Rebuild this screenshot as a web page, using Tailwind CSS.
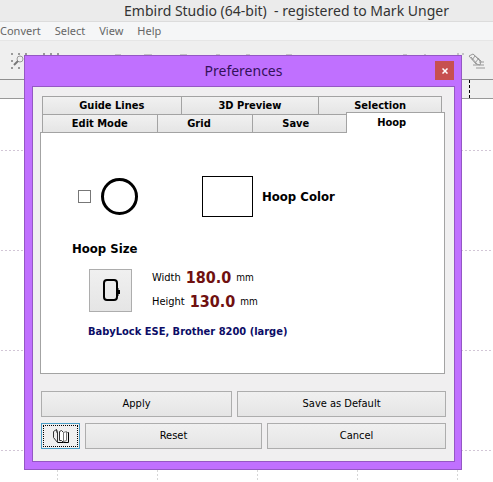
<!DOCTYPE html>
<html lang="en">
<head>
    <meta charset="UTF-8">
    <meta name="viewport" content="width=device-width, initial-scale=1.0">
    <title>Embird Studio - Preferences</title>
    <script src="https://cdn.jsdelivr.net/npm/@tailwindcss/browser@4"></script>
</head>
<body class="relative h-screen overflow-hidden bg-white font-['Noto_Sans','Open_Sans',sans-serif] text-[#222]">
    <!-- Main window -->
    <div class="flex h-full flex-col">
        <header class="flex h-[22px] shrink-0 items-center justify-center border-b border-[#dcdcdc] bg-[#ebebeb] pl-20">
            <h1 class="whitespace-pre text-[14px] leading-5 text-[#333]">Embird Studio (64-bit)  - registered to Mark Unger</h1>
        </header>
        <nav class="flex h-[19px] shrink-0 items-center gap-[14px] border-b border-[#e6e6e6] bg-[#f5f6f7] text-[11px] leading-4 text-[#666]">
            <button>Convert</button>
            <button>Select</button>
            <button>View</button>
            <button>Help</button>
        </nav>
        <div class="flex h-[39px] shrink-0 items-start justify-between border-b border-[#8f8f8f] bg-[#efefef] pt-[11px] pr-1 pl-[10px]">
            <svg class="h-5 w-[320px]" viewBox="0 0 320 20" fill="none" stroke="#999">
                <path d="M1 2h16M1 9h3M1 16h12M33 2h18" stroke-width="2" stroke-dasharray="2 5" />
                <circle cx="10" cy="7" r="3" />
                <path d="M8 9l-4 4" stroke="#777" stroke-width="2" />
                <path d="M105 3h6M134 3h8M170 3h7M206 3h4M236 3h4M276 3h6" />
            </svg>
            <svg class="h-5 w-[90px]" viewBox="0 0 90 20" fill="none" stroke="#999">
                <path d="M4 3h4M25 3h2M58 2h2M63 2h2" />
                <path d="M70 4l4-2 8 7-1 4-4-1zM72 5l6 7M74 2l7 7M73 8l3-4M76 11l4-5" />
                <path d="M74 13h11M77 16h9M80 10h5" />
            </svg>
        </div>
        <div class="flex h-[19px] shrink-0 justify-end border-b border-[#999] bg-[#efefef] pr-[23px]">
            <div class="border-l border-dashed border-black"></div>
        </div>
        <svg class="min-h-0 w-full flex-1" aria-hidden="true">
            <defs>
                <pattern id="grid" x="57" y="51" width="100" height="100" patternUnits="userSpaceOnUse">
                    <path d="M0 .5H100" stroke="#d2c6d6" stroke-dasharray="2 2" />
                    <path d="M.5 0V100" stroke="#d6d6d6" stroke-dasharray="2 2" />
                </pattern>
            </defs>
            <rect width="100%" height="100%" fill="url(#grid)" />
        </svg>
    </div>

    <!-- Preferences dialog -->
    <section role="dialog" aria-labelledby="dialogTitle" class="absolute top-[55px] right-[31px] left-6 border border-[#9458c4] bg-[#c070ff] pr-[6px] pb-[7px] pl-[7px]">
        <div class="relative flex h-[30px] items-center justify-center">
            <h2 id="dialogTitle" class="text-[14px] leading-5 text-[#33105a]">Preferences</h2>
            <button aria-label="Close" class="absolute top-[5px] right-px flex h-[19px] w-[19px] items-center justify-center bg-[#c75050]">
                <svg class="h-[6px] w-[6px]" viewBox="0 0 6 6" stroke="#fff" stroke-width="1.500"><path d="M.5.5l5 5M5.500.5l-5 5" /></svg>
            </button>
        </div>

        <div class="border border-[#9458c4] bg-[#f0eff0] pt-[9px] pr-[9px] pb-3 pl-[7px] font-['DejaVu_Sans_Condensed','DejaVu_Sans',sans-serif] text-[11px] leading-4 text-black">
            <!-- Tabs -->
            <div role="tablist" class="pr-[3px] pl-[2px] font-bold">
                <div class="flex h-[18px] border-t border-l border-[#a3a3a3]">
                    <button role="tab" class="flex-[139] border-r border-[#a3a3a3] bg-linear-to-b from-[#f1f1f1] to-[#e5e5e5]">Guide Lines</button>
                    <button role="tab" class="flex-[138] border-r border-[#a3a3a3] bg-linear-to-b from-[#f1f1f1] to-[#e5e5e5]">3D Preview</button>
                    <button role="tab" class="flex-[123] border-r border-[#a3a3a3] bg-linear-to-b from-[#f1f1f1] to-[#e5e5e5]">Selection</button>
                </div>
                <div class="-mr-[3px] flex h-[18px] border-l border-[#a3a3a3]">
                    <button role="tab" class="flex-[115] border-t border-r border-[#a3a3a3] bg-linear-to-b from-[#f1f1f1] to-[#e5e5e5]">Edit Mode</button>
                    <button role="tab" class="flex-[96] border-t border-r border-[#a3a3a3] bg-linear-to-b from-[#f1f1f1] to-[#e5e5e5]"><span class="pr-3">Grid</span></button>
                    <button role="tab" class="flex-[94] border-t border-[#a3a3a3] bg-linear-to-b from-[#f1f1f1] to-[#e5e5e5]"><span class="pr-2">Save</span></button>
                    <button role="tab" aria-selected="true" class="z-10 -mt-[2px] -mb-px flex-[98] border-x border-t border-[#a3a3a3] bg-white"><span class="pr-2">Hoop</span></button>
                </div>
            </div>

            <!-- Hoop tab -->
            <div role="tabpanel" class="border border-[#a3a3a3] bg-white pt-[43px] pb-[33px] pl-[31px]">
                <div class="flex items-center pl-[6px]">
                    <label class="flex items-center gap-[10px]">
                        <input type="checkbox" aria-label="Show hoop" class="h-[13px] w-[13px] appearance-none border border-[#777] bg-white">
                        <svg class="h-[38px] w-[38px]" viewBox="0 0 38 38" fill="none" stroke="#000" stroke-width="3"><circle cx="18.500" cy="18.500" r="17" /></svg>
                    </label>
                    <button id="hoopColor" aria-label="Hoop Color" class="ml-[63px] h-[41px] w-[51px] border border-black bg-white"></button>
                    <label for="hoopColor" class="ml-[9px] text-[13px] font-bold">Hoop Color</label>
                </div>

                <h3 class="mt-6 text-[13px] font-bold">Hoop Size</h3>
                <div class="mt-[9px] flex items-center gap-5 pl-[17px]">
                    <button aria-label="Choose hoop" class="flex h-[43px] w-[43px] items-center justify-center border border-[#adadad] bg-linear-to-b from-[#f0f0f0] to-[#e5e5e5]">
                        <svg class="h-[22px] w-[18px]" viewBox="0 0 18 22" fill="none" stroke="#000" stroke-width="2">
                            <rect x="2" y="1" width="13" height="20" rx="3" />
                            <path d="M16 9v8" stroke-width="1" />
                            <path d="M17 11v4" />
                        </svg>
                    </button>
                    <div>
                        <p class="flex h-6 items-center gap-[5px]">Width <b class="text-[16px] font-bold text-[#701010]">180.0</b> <span class="text-[10px]">mm</span></p>
                        <p class="flex h-6 items-center gap-[5px]">Height <b class="text-[16px] font-bold text-[#701010]">130.0</b> <span class="text-[10px]">mm</span></p>
                    </div>
                </div>
                <p class="mt-[10px] pl-4 font-bold text-[#0c0c66]">BabyLock ESE, Brother 8200 (large)</p>
            </div>

            <!-- Buttons -->
            <div class="-mr-px mt-[17px] flex gap-[5px] pl-px">
                <button class="h-[26px] flex-[191] border border-[#adadad] bg-linear-to-b from-[#f0f0f0] to-[#e5e5e5]">Apply</button>
                <button class="h-[26px] flex-[209] border border-[#adadad] bg-linear-to-b from-[#f0f0f0] to-[#e5e5e5]">Save as Default</button>
            </div>
            <div class="-mr-px mt-[6px] flex gap-[5px] pl-px">
                <button aria-label="Help" class="h-[26px] w-[39px] border border-[#4a9cc4] bg-[#f0f0f0] p-px">
                    <span class="flex h-full items-center justify-center border border-dotted border-black">
                        <svg class="h-4 w-4" viewBox="0 0 16 16" fill="none" stroke="#333">
                            <path d="M4.500 14.500h11v-10h-1" stroke="#000" />
                            <path d="M3.500 1.500l-3 2v6l4 5v-9z" fill="#eee" />
                            <path d="M4.500 13.500v-9M6.500 12.500v-9l2-1 2 2v10l-2-2z" fill="#fff" />
                            <path d="M10.500 13.500v-9l3-1v9z" fill="#fff" stroke="#777" />
                            <path d="M3.500 1.500l1 4" />
                        </svg>
                    </span>
                </button>
                <button class="h-[26px] flex-[177] border border-[#adadad] bg-linear-to-b from-[#f0f0f0] to-[#e5e5e5]">Reset</button>
                <button class="h-[26px] flex-[179] border border-[#adadad] bg-linear-to-b from-[#f0f0f0] to-[#e5e5e5]">Cancel</button>
            </div>
        </div>
    </section>
</body>
</html>
